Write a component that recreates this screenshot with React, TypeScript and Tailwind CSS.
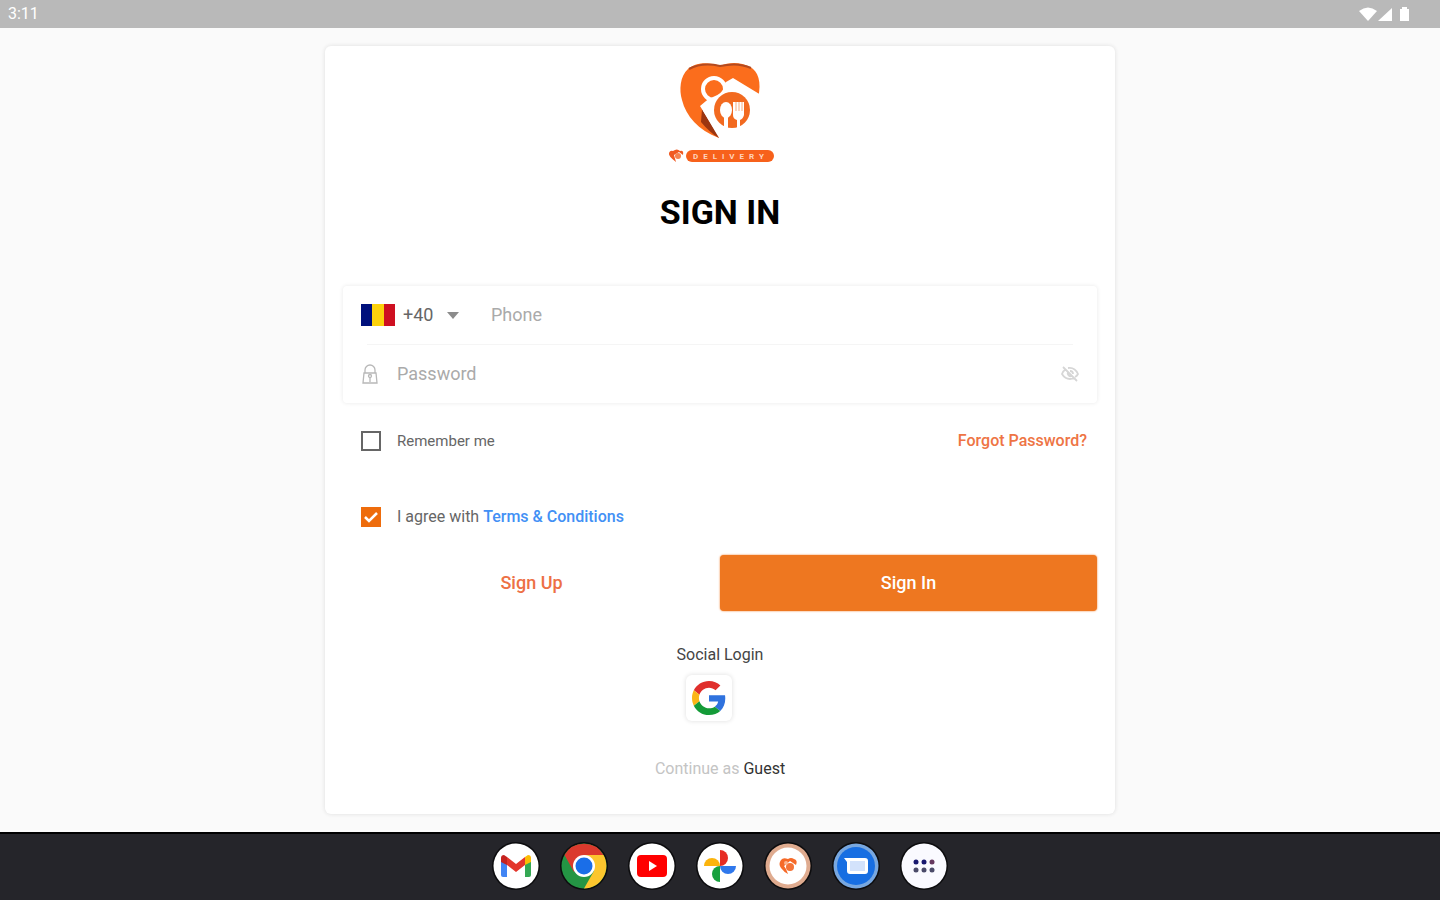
import { useState } from "react";
import type { ReactNode } from "react";

function StatusIcons() {
  return (
    <svg width="54" height="16" viewBox="0 0 54 16" fill="#fff" role="img" aria-label="Wi-Fi, signal and battery">
      <path d="M1 5Q10-2 19 5L10 15Z" />
      <path d="M20 15L34 2V15Z" />
      <path d="M44 1h5v2h2v12h-9V3h2Z" />
    </svg>
  );
}

function BrandLogo() {
  return (
    <svg width="112" height="110" viewBox="0 0 112 110" role="img" aria-label="Delivery">
      <path
        d="M56 8C46 4 32 4 24 11C16 18 15 32 18 42C22 58 34 72 55 80L39 58V47L94 40C98 24 94 13 86 9C77 4 65 4 56 8Z"
        fill="#fb6d1c"
      />
      <path d="M38 51L55 80C48 76 42 70 37 64Z" fill="#9c3510" />
      <path d="M25 11Q38 4 56 8Q74 4 87 10" fill="none" stroke="#b34a20" strokeWidth="2" />
      <path d="M36 48L48 38L62 24L69 20L97 37V47L88 66L68 78L52 74Z" fill="#fff" />
      <circle cx="50" cy="31" r="11" fill="#fb6d1c" stroke="#fff" strokeWidth="4" />
      <path d="M42 47Q43 41 49 39Q58 36 62 27L68 32L51 58Z" fill="#fff" />
      <circle cx="68" cy="52" r="18" fill="#f26a20" />
      <ellipse cx="62" cy="52" rx="6" ry="8" fill="#fff" />
      <path d="M60 56h4v15h-4Z" fill="#fff" />
      <path d="M69 44h11v13q-1 4-4 5v9h-3v-9q-4-1-4-5Z" fill="#fff" />
      <path d="M72 44v9M75 44v9M78 44v9" stroke="#f8ad80" strokeWidth="1" />
      <path d="M9 93Q13 90 16 93Q20 92 19 97L15 94L10 97L12 104Q4 98 5 95Q6 92 9 93Z" fill="#f05a22" />
      <circle cx="14" cy="98" r="3" fill="#f58350" />
      <rect x="22" y="92" width="88" height="12" rx="6" fill="#f7611b" />
      <text x="29" y="101" fill="#ffd3bd" fontFamily="Roboto, sans-serif" fontSize="8" fontWeight="700" letterSpacing="5">
        DELIVERY
      </text>
    </svg>
  );
}

function Flag() {
  return (
    <svg width="34" height="22" viewBox="0 0 34 22" role="img" aria-label="Romania">
      <path fill="#00107c" d="M0 0h11v22H0z" />
      <path fill="#fcd20c" d="M11 0h12v22H11z" />
      <path fill="#ce1021" d="M23 0h11v22H23z" />
    </svg>
  );
}

function LockIcon() {
  return (
    <svg width="18" height="21" viewBox="0 0 18 21" fill="none" stroke="#b8b8b8" strokeWidth="1.300" aria-hidden="true">
      <path d="M4 9V6a5 5 0 0 1 10 0v3M3 9h12l1 10H2ZM9 13v5" />
      <circle cx="9" cy="12" r="1.500" />
    </svg>
  );
}

function EyeOffIcon() {
  return (
    <svg width="18" height="16" viewBox="0 0 18 16" fill="none" stroke="#d6d6d6" strokeWidth="1.800" aria-hidden="true">
      <path d="M5 3Q2 5 1 8q3 5 8 5 2 0 4-1M7 2q7-1 10 6-1 2-3 3M2 1l14 14M7 6a3 3 0 0 0 4 4M9 5q3 0 3 3" />
    </svg>
  );
}

function GoogleIcon() {
  return (
    <svg width="34" height="34" viewBox="0 0 48 48" aria-hidden="true">
      <path fill="#e02f2c" d="M24 9.500c3.540 0 6.710 1.220 9.210 3.600l6.850-6.850C35.900 2.380 30.470 0 24 0 14.620 0 6.510 5.380 2.560 13.220l7.980 6.190C12.430 13.720 17.740 9.500 24 9.500z" />
      <path fill="#2f72de" d="M46.980 24.550c0-1.570-.15-3.090-.38-4.550H24v9.020h12.940c-.58 2.960-2.260 5.480-4.780 7.180l7.730 6c4.510-4.180 7.090-10.360 7.090-17.650z" />
      <path fill="#fbb516" d="M10.530 28.590c-.48-1.450-.76-2.990-.76-4.590s.27-3.140.76-4.590l-7.980-6.190C.92 16.460 0 20.120 0 24c0 3.880.92 7.540 2.560 10.780l7.970-6.190z" />
      <path fill="#149b38" d="M24 48c6.480 0 11.930-2.130 15.890-5.810l-7.730-6c-2.150 1.450-4.920 2.300-8.160 2.300-6.260 0-11.570-4.220-13.470-9.910l-7.980 6.190C6.510 42.620 14.620 48 24 48z" />
    </svg>
  );
}

function AppIcon({ label, children }: { label: string; children: ReactNode }) {
  return (
    <button type="button" aria-label={label} className="size-12 rounded-full">
      <svg width="48" height="48" viewBox="0 0 48 48" aria-hidden="true">
        <circle cx="24" cy="24" r="24" fill="#0c0c0e" />
        {children}
      </svg>
    </button>
  );
}

function Dock() {
  return (
    <nav aria-label="Apps" className="flex h-17 shrink-0 items-center justify-center gap-5 border-t-2 border-black bg-[#25252a] pb-0.5">
      <AppIcon label="Gmail">
        <circle cx="24" cy="24" r="22.500" fill="#fff" />
        <path d="M9 18l6 4v13h-4q-2 0-2-2Z" fill="#4285f4" />
        <path d="M33 22l6-4v15q0 2-2 2h-4Z" fill="#34a853" />
        <path d="M15 15l9 7 9-7v8l-9 7-9-7Z" fill="#e3362b" />
        <path d="M9 20v-4q0-3 3-3l3 2v8Z" fill="#c5221f" />
        <path d="M39 20v-4q0-3-3-3l-3 2v8Z" fill="#fbbc04" />
      </AppIcon>
      <AppIcon label="Chrome">
        <circle cx="24" cy="24" r="22.500" fill="#249544" />
        <path d="M4.500 13A22.500 22.500 0 0 1 43.500 13H24L14 30Z" fill="#db3a2d" />
        <path d="M24 13h19.500A22.500 22.500 0 0 1 24 46.500L34 29Z" fill="#fcc62e" />
        <circle cx="24" cy="24" r="11" fill="#fff" />
        <circle cx="24" cy="24" r="8.500" fill="#1a6ee8" />
      </AppIcon>
      <AppIcon label="YouTube">
        <circle cx="24" cy="24" r="22.500" fill="#fff" />
        <rect x="9" y="13" width="30" height="22" rx="4" fill="#f00" />
        <path d="M21 19l8 5-8 5Z" fill="#fff" />
      </AppIcon>
      <AppIcon label="Photos">
        <circle cx="24" cy="24" r="22.500" fill="#fff" />
        <path d="M24 8a8 8 0 0 1 0 16Z" fill="#e62c24" />
        <path d="M40 24a8 8 0 0 1-16 0Z" fill="#2f78ec" />
        <path d="M24 40a8 8 0 0 1 0-16Z" fill="#17a03d" />
        <path d="M8 24a8 8 0 0 1 16 0Z" fill="#fbb40c" />
      </AppIcon>
      <AppIcon label="Delivery">
        <circle cx="24" cy="24" r="22.500" fill="#dfab8f" />
        <circle cx="24" cy="24" r="18.500" fill="#fff" />
        <path d="M24 17Q19 15 17 18Q14 22 17 26Q20 30 24 32L22 27L20 24L26 19L32 23Q34 18 30 17Q27 15 24 17Z" fill="#f66a28" />
        <circle cx="26" cy="25" r="4" fill="#f47438" />
        <circle cx="22" cy="21" r="2" fill="#fbb48f" />
      </AppIcon>
      <AppIcon label="Messages">
        <circle cx="24" cy="24" r="22.500" fill="#78a7df" />
        <circle cx="24" cy="24" r="19" fill="#176ee2" />
        <path d="M12 16h21q3 0 3 3v10q0 3-3 3H18q-3 0-3-3V20Z" fill="#fff" />
        <path d="M18 19h15v10H18Z" fill="#d3e2fb" />
      </AppIcon>
      <AppIcon label="All apps">
        <circle cx="24" cy="24" r="22.500" fill="#fafaff" />
        <g fill="#18186e">
          <circle cx="16" cy="20" r="2.500" />
          <circle cx="24" cy="20" r="2.500" />
        </g>
        <circle cx="32" cy="20" r="2.500" fill="#65385f" />
        <g fill="#4b4b69">
          <circle cx="16" cy="28" r="2.500" />
          <circle cx="24" cy="28" r="2.500" />
          <circle cx="32" cy="28" r="2.500" />
        </g>
      </AppIcon>
    </nav>
  );
}

const checkboxClass = "peer col-start-1 row-start-1 size-5 appearance-none border-2 border-[#666] bg-white checked:border-[#ee6c0c] checked:bg-[#ee6c0c]";

function Checkbox({ id, checked, onChange }: { id: string; checked: boolean; onChange: (value: boolean) => void }) {
  return (
    <span className="grid size-5 place-items-center">
      <input id={id} type="checkbox" checked={checked} onChange={(e) => onChange(e.target.checked)} className={checkboxClass} />
      <svg width="16" height="14" viewBox="0 0 16 14" className="pointer-events-none invisible z-10 col-start-1 row-start-1 peer-checked:visible" aria-hidden="true">
        <path d="M2 7l4 4 8-8" fill="none" stroke="#fff" strokeWidth="2.500" />
      </svg>
    </span>
  );
}

export default function App() {
  const [remember, setRemember] = useState(false);
  const [agree, setAgree] = useState(true);
  const [showPassword, setShowPassword] = useState(false);

  return (
    <div className="flex min-h-screen flex-col bg-[#fafafa] font-[Roboto,sans-serif] text-[#666]">
      <header className="flex h-7 shrink-0 items-center justify-between bg-[#b9b9b9] pr-7 pl-2 text-base text-white">
        <time>3:11</time>
        <StatusIcons />
      </header>

      <main className="flex grow flex-col items-center px-4 py-4.5">
        <form
          onSubmit={(e) => e.preventDefault()}
          className="flex w-full max-w-[790px] grow flex-col rounded-md bg-white px-4.5 pt-3 shadow-[0_0_4px_#dedede]"
        >
          <div className="flex flex-col items-center">
            <BrandLogo />
            <h1 className="mt-6 text-[34px] leading-10 font-bold text-black">SIGN IN</h1>
          </div>

          <div className="mt-13.5 rounded-sm bg-white shadow-[0_0_4px_#e8e8e8]">
            <div className="flex h-14.5 items-center pl-4.5">
              <Flag />
              <div className="ml-2 flex items-center">
                <select aria-label="Country code" defaultValue="+40" className="w-10 appearance-none bg-transparent text-lg text-[#666] outline-none">
                  <option>+40</option>
                </select>
                <svg width="12" height="7" viewBox="0 0 12 7" fill="#8c8c8c" className="ml-1" aria-hidden="true">
                  <path d="M0 0h12L6 7Z" />
                </svg>
              </div>
              <input aria-label="Phone" type="tel" placeholder="Phone" className="ml-8 min-w-0 grow bg-transparent text-lg outline-none placeholder:text-[#aaa]" />
            </div>
            <hr className="mx-6 border-[#f5f5f5]" />
            <div className="flex h-14.5 items-center pr-4.5 pl-4.5">
              <LockIcon />
              <input aria-label="Password" type={showPassword ? "text" : "password"} placeholder="Password" className="ml-4.5 min-w-0 grow bg-transparent text-lg outline-none placeholder:text-[#aaa]" />
              <button type="button" aria-label="Show password" onClick={() => setShowPassword(!showPassword)}>
                <EyeOffIcon />
              </button>
            </div>
          </div>

          <div className="mt-7 flex h-5 items-center justify-between pr-2.5 pl-4.5">
            <div className="flex items-center gap-4 text-[15px]">
              <Checkbox id="remember" checked={remember} onChange={setRemember} />
              <label htmlFor="remember">Remember me</label>
            </div>
            <a href="#forgot" className="font-medium text-[#ee7444]">Forgot Password?</a>
          </div>

          <div className="mt-14 flex h-5 items-center gap-4 pl-4.5">
            <Checkbox id="agree" checked={agree} onChange={setAgree} />
            <span>
              <label htmlFor="agree">I agree with</label>{" "}
              <a href="#terms" className="font-medium text-[#4290f5]">Terms &amp; Conditions</a>
            </span>
          </div>

          <div className="mt-7 grid grid-cols-2 text-lg font-medium">
            <button type="button" className="h-14 text-[#ed7045]">Sign Up</button>
            <button type="submit" className="h-14 rounded-sm bg-[#ee7720] text-white shadow-[0_0_2px_#ee7720]">Sign In</button>
          </div>

          <section aria-label="Social Login" className="mt-8 flex flex-col items-center">
            <h2 className="leading-6 text-[#444]">Social Login</h2>
            <button type="button" aria-label="Sign in with Google" className="mt-2 mr-5.5 grid size-11.5 place-items-center rounded-md bg-white shadow-[0_0_5px_#ddd]">
              <GoogleIcon />
            </button>
          </section>

          <p className="mt-9 mb-8 text-center leading-6 text-[#c4c4c4]">
            Continue as <a href="#guest" className="text-[#333]">Guest</a>
          </p>
        </form>
      </main>

      <Dock />
    </div>
  );
}
